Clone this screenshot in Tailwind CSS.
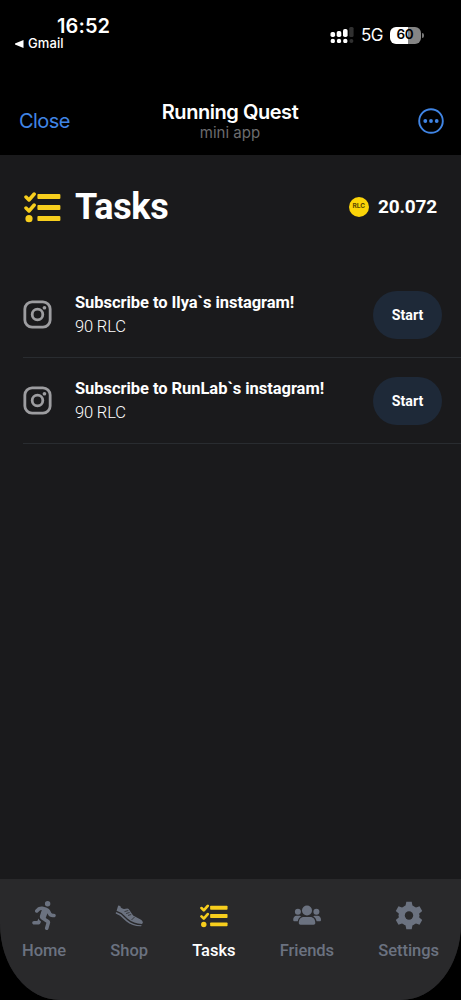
<!DOCTYPE html>
<html lang="en">
<head>
<meta charset="utf-8">
<meta name="viewport" content="width=device-width, initial-scale=1">
<title>Running Quest</title>
<script src="https://cdn.jsdelivr.net/npm/@tailwindcss/browser@4"></script>
</head>
<body class="bg-black">
<svg class="hidden">
  <symbol id="checks" viewBox="0 0 37 31">
    <g fill="none" stroke="currentColor" stroke-width="3.5" stroke-linecap="round" stroke-linejoin="round"><path d="M2 5 5 8 10.2 2M2 16 5 19 10.200 13"/></g>
    <g fill="currentColor"><circle cx="5" cy="26.700" r="3.600"/><rect x="13.400" y="2" width="23" height="5.100" rx="1"/><rect x="13.400" y="13" width="23" height="5.100" rx="1"/><rect x="13.400" y="24" width="23" height="5.100" rx="1"/></g>
  </symbol>
  <symbol id="insta" viewBox="0 0 30 30">
    <g fill="none" stroke="currentColor" stroke-width="2.900"><rect x="1.900" y="1.900" width="26.200" height="26.200" rx="7.500"/><circle cx="15" cy="15" r="5.500"/></g><circle cx="22.200" cy="8" r="1.900" fill="currentColor"/>
  </symbol>
</svg>
<div class="flex h-[1000px] w-[461px] flex-col overflow-hidden bg-black font-['Inter',sans-serif] text-white">
  <header class="h-[155px] shrink-0">
    <div class="flex h-[100px] justify-between">
      <div class="pt-[14px] pl-[15px]">
        <div class="pl-[42px] text-[20px] leading-6 font-semibold tracking-[0.1px]">16:52</div>
        <div class="-mt-[1px] flex items-center gap-[4px] text-[13px] leading-[13px] font-medium tracking-[0.1px]">
          <svg class="h-2 w-[9px]" viewBox="0 0 9 8" fill="white"><path d="M8.500 0v8L0 4.500v-1z"/></svg>Gmail
        </div>
      </div>
      <div class="mt-[26px] flex h-[18px] items-center pr-[37px]">
        <svg class="h-4 w-6" viewBox="0 0 24 16" fill="white"><rect x=".5" y="5" width="4.600" height="5" rx="1.800"/><rect x="6.700" y="4" width="4.600" height="6" rx="1.800"/><rect x="13" y="2" width="4.600" height="8" rx="1.800"/><rect x="19.200" y="0" width="4.400" height="10" rx="1.500" fill="#303030"/><circle cx="2.800" cy="14" r="2.200"/><circle cx="9" cy="14" r="2.200"/><circle cx="15.300" cy="14" r="2.200"/><circle cx="21.400" cy="14" r="2" fill="#303030"/></svg>
        <span class="ml-[7px] w-[22px] text-[17px] leading-[18px] tracking-[-0.5px] whitespace-nowrap">5G</span>
        <div class="ml-[7px] flex h-[17px] w-[31px] items-center justify-center rounded-[6px] bg-linear-to-r from-white from-58% to-[#858585] to-58% pr-[1px] text-[13.500px] leading-none font-semibold tracking-[-0.2px] text-black">60</div>
        <div class="ml-px h-[5px] w-[2px] rounded-r-full bg-[#777]"></div>
      </div>
    </div>
    <div class="grid grid-cols-[1fr_auto_1fr] pr-[17px] pl-[19px]">
      <div class="pt-[9px] text-[20px] leading-6 tracking-[-0.550px] text-[#4085e5]">Close</div>
      <div class="-translate-x-[1.500px] text-center"><div class="text-[20px] leading-6 font-semibold tracking-[-0.450px]">Running Quest</div><div class="text-[15px] leading-[18px] text-[#6c6c6e]">mini app</div></div>
      <svg class="mt-[8px] size-[26px] justify-self-end" viewBox="0 0 26 26"><circle cx="13" cy="13" r="11.800" fill="none" stroke="#4085e5" stroke-width="1.900"/><g fill="#4085e5"><circle cx="7.300" cy="13" r="1.900"/><circle cx="13" cy="13" r="1.900"/><circle cx="18.700" cy="13" r="1.900"/></g></svg>
    </div>
  </header>
  <main class="flex flex-1 flex-col overflow-hidden rounded-b-[60px_76px] bg-[#1a1a1c] font-['Roboto',sans-serif]">
    <div class="flex h-[117px] items-start justify-between px-[24px] pt-[31px]">
      <div class="flex items-center gap-[14px]"><svg class="h-[31px] w-[37px] text-[#f7ce1d]"><use href="#checks"/></svg><h1 class="text-[36px] leading-[42px] font-bold tracking-[-0.350px]">Tasks</h1></div>
      <div class="flex h-[42px] items-center gap-[9px]"><div class="flex size-[20px] items-center justify-center rounded-full bg-[#fbd408] font-['Inter',sans-serif] text-[6.500px] font-bold text-[#5a4800]">RLC</div><span class="text-[19px] leading-6 font-bold tracking-[-0.150px]">20.072</span></div>
    </div>
    <section class="pl-[23px]">
      <div class="flex h-[86px] items-center border-b border-[#292c30] pr-[19px]">
        <svg class="size-[29px] text-[#9d9da0]"><use href="#insta"/></svg>
        <div class="ml-[23px] flex-1"><div class="text-[16.500px] leading-6 font-bold tracking-[-0.050px]">Subscribe to Ilya`s instagram!</div><div class="text-[16.500px] leading-[23px] font-light tracking-[-0.150px]">90 RLC</div></div>
        <button class="h-[48px] w-[69px] rounded-full bg-[#1e2938] pt-[2px] text-[14.200px] font-bold">Start</button>
      </div>
      <div class="flex h-[86px] items-center border-b border-[#292c30] pr-[19px]">
        <svg class="size-[29px] text-[#9d9da0]"><use href="#insta"/></svg>
        <div class="ml-[23px] flex-1"><div class="text-[16.500px] leading-6 font-bold tracking-[-0.050px]">Subscribe to RunLab`s instagram!</div><div class="text-[16.500px] leading-[23px] font-light tracking-[-0.150px]">90 RLC</div></div>
        <button class="h-[48px] w-[69px] rounded-full bg-[#1e2938] pt-[2px] text-[14.200px] font-bold">Start</button>
      </div>
    </section>
    <nav class="mt-auto flex h-[121px] items-start justify-between bg-[#29292b] px-[22px] pt-[22px] text-[16.500px] leading-6 font-medium tracking-[-0.050px] text-[#6b7280]">
      <div class="flex flex-col items-center gap-[9px]"><svg class="h-[29px] w-[26px]" viewBox="0 0 416 512" fill="currentColor"><path d="M320 48a48 48 0 1 0-96 0 48 48 0 1 0 96 0zM125.700 175.500c9.900-9.900 23.400-15.500 37.500-15.500 1.900 0 3.800.1 5.600.3L137.600 254c-9.300 28 1.700 58.800 26.800 74.500l86.200 53.900-25.400 88.800c-4.900 17 5 34.700 22 39.600s34.700-5 39.600-22l28.700-100.400c5.900-20.600-2.600-42.600-20.700-53.900L238 299l30.900-82.400 5.100 12.300C289 264.700 323.900 288 362.700 288H384c17.700 0 32-14.300 32-32s-14.300-32-32-32h-21.300c-12.900 0-24.600-7.800-29.500-19.700l-6.300-15c-14.600-35.100-44.100-61.900-80.500-73.100l-48.700-15c-11.100-3.400-22.700-5.200-34.400-5.200-31 0-60.800 12.300-82.700 34.300l-23.200 23.100c-12.500 12.500-12.500 32.800 0 45.300s32.800 12.500 45.300 0zM91.200 352H32c-17.700 0-32 14.300-32 32s14.300 32 32 32h69.600c19 0 36.200-11.200 43.900-28.500l11.500-25.900-9.500-6c-17.500-10.900-30.500-26.800-37.900-44.900z"/></svg><span>Home</span></div>
      <div class="flex flex-col items-center gap-[9px]"><svg class="h-[29px] w-[30px]" viewBox="0 0 30 29"><path d="M4.200 4.600 6.300 5.100c.3 1.800 1.800 3 3.900 2.800l3.200-.5 1.300.6 4.400 6.500 7 3.700c2 1 3 2.300 2.700 3.800l-1 .9c-5.400-.2-10-1.800-14-5.200L7.600 12l-5-2.300z" fill="currentColor"/><path d="m2 10.900 5 2.300 6.400 6C17.500 22.600 22 24.200 27.700 24.200l-.6 1.100c-5.800.1-10.700-1.600-15-5.100l-6-5.500L1.700 12.400z" fill="currentColor"/><path d="m10.500 10.600 3.800-1.100m-2.200 3 3.500-1m-1.600 2.900 3.200-.9M20.500 16l-3 3" stroke="#29292b" stroke-width=".8"/></svg><span>Shop</span></div>
      <div class="flex flex-col items-center gap-[9px] text-white"><svg class="mt-[3px] mb-[2px] h-[24px] w-[28px] text-[#f7ce1d]" viewBox="0 0 37 31"><use href="#checks"/></svg><span>Tasks</span></div>
      <div class="flex flex-col items-center gap-[9px]"><svg class="h-[29px] w-[28px]" viewBox="0 0 28 29" fill="currentColor"><circle cx="14" cy="9.500" r="5"/><circle cx="4.900" cy="10.700" r="3"/><circle cx="23.400" cy="10.700" r="3"/><path d="M5.800 22c0-4 2.200-6 5-6h6.500c3 0 5 2.300 5 6 0 1-.7 1.700-1.700 1.700H7.500c-1 0-1.700-.7-1.700-1.700zM3.500 14.700h3.300l1.300.5c-1.700 1.200-3 2.700-3.300 5.100H1.700c-1 0-1.500-.6-1.500-1.600 0-2.300 1.200-4 3.300-4zM24.500 14.700h-3l-1.300.5c1.700 1.200 3 2.700 3.400 5.100h2.900c1 0 1.500-.6 1.500-1.600 0-2.300-1.300-4-3.500-4z"/></svg><span>Friends</span></div>
      <div class="flex flex-col items-center gap-[9px]"><svg class="h-[29px] w-[28px]" viewBox="0 0 28 29"><mask id="gearHole"><rect width="28" height="29" fill="white"/><circle cx="14" cy="14.500" r="4.200" fill="black"/></mask><g fill="currentColor" mask="url(#gearHole)"><circle cx="14" cy="14.500" r="10.500"/><path id="tooth" d="M11.300.8h5.400l1 5v17.400l-1 5h-5.400l-1-5V5.800z"/><use href="#tooth" transform="rotate(60 14 14.500)"/><use href="#tooth" transform="rotate(120 14 14.500)"/></g></svg><span>Settings</span></div>
    </nav>
  </main>
</div>
</body>
</html>
